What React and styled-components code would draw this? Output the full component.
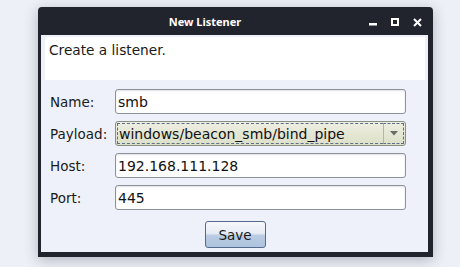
import React from "react";
import styled, { createGlobalStyle } from "styled-components";

const GlobalStyle = createGlobalStyle`
  html, body {
    margin: 0;
    background: #edf0f7;
  }
  * {
    box-sizing: border-box;
  }
`;

const App = () => {
  return (
    <Page>
      <GlobalStyle />
      <Window>
        <TitleBar>
          <Title>New Listener</Title>
          <Controls>
            <svg width="8" height="8" viewBox="0 0 8 8">
              <rect x="0" y="5" width="8" height="2.5" fill="#fff" />
            </svg>
            <svg width="8" height="8" viewBox="0 0 8 8">
              <rect x="1" y="1" width="6" height="6" fill="none" stroke="#fff" strokeWidth="2" />
            </svg>
            <svg width="9" height="9" viewBox="0 0 9 9">
              <path d="M1 1 L8 8 M8 1 L1 8" stroke="#fff" strokeWidth="2" />
            </svg>
          </Controls>
        </TitleBar>
        <Body>
          <Description>Create a listener.</Description>
          <Form>
            <Label>Name:</Label>
            <Field defaultValue="smb" />
            <Label>Payload:</Label>
            <Combo>
              <ComboText>windows/beacon_smb/bind_pipe</ComboText>
              <ComboArrow>
                <svg width="8" height="5" viewBox="0 0 8 5">
                  <path d="M0 0 L8 0 L4 4.5 Z" fill="#6a6d66" />
                </svg>
              </ComboArrow>
            </Combo>
            <Label>Host:</Label>
            <Field defaultValue="192.168.111.128" />
            <Label>Port:</Label>
            <Field defaultValue="445" />
          </Form>
          <SaveButton>Save</SaveButton>
        </Body>
      </Window>
    </Page>
  );
};
export default App;

const Page = styled.div`
  padding: 7px 0 0 38px;
  height: 267px;
`;

const Window = styled.div`
  width: 395px;
  height: 250px;
  display: flex;
  flex-direction: column;
  background: #21242d;
  border-radius: 4px 4px 0 0;
  padding: 0 5px 5px 3px;
  box-shadow: 0 3px 14px rgba(40, 44, 60, 0.3);
`;

const TitleBar = styled.div`
  height: 28px;
  display: flex;
  align-items: center;
`;

const Title = styled.div`
  flex: 1;
  text-align: center;
  color: #ffffff;
  font-family: "Noto Sans", sans-serif;
  font-weight: bold;
  font-size: 11px;
  padding-top: 1px;
`;

const Controls = styled.div`
  display: flex;
  align-items: center;
  gap: 14px;
  padding-right: 6px;
  margin-top: 2px;
`;

const Body = styled.div`
  flex: 1;
  background: #eef1f9;
  display: flex;
  flex-direction: column;
  padding: 2px 3px 0 4px;
`;

const Description = styled.div`
  height: 43px;
  background: #ffffff;
  padding: 5px 0 0 4px;
  font-family: "DejaVu Sans", sans-serif;
  font-size: 13.7px;
  color: #1a1a1a;
`;

const Form = styled.div`
  display: grid;
  grid-template-columns: 70px 291px;
  grid-auto-rows: 25px;
  row-gap: 7px;
  margin-top: 9px;
  align-items: center;
`;

const Label = styled.span`
  padding-left: 5px;
  font-family: "DejaVu Sans", sans-serif;
  font-size: 13.5px;
  color: #1a1a1a;
`;

const Field = styled.input`
  height: 25px;
  width: 100%;
  margin: 0;
  padding: 0 2px;
  border: 1px solid #8d9199;
  border-radius: 3px;
  background: #ffffff;
  box-shadow: inset 0 1px 2px rgba(0, 0, 0, 0.12);
  font-family: "DejaVu Sans", sans-serif;
  font-size: 14px;
  color: #111;
  outline: none;
`;

const Combo = styled.div`
  height: 25px;
  display: flex;
  border: 1px solid #8a8f86;
  border-radius: 3px;
  background: linear-gradient(#eeefe2, #dcdfc8);
  padding: 1px;
`;

const ComboText = styled.div`
  flex: 1;
  display: flex;
  align-items: center;
  padding-left: 1px;
  border: 1px dashed #5d6f88;
  border-right: none;
  font-family: "DejaVu Sans", sans-serif;
  font-size: 14px;
  color: #111;
  white-space: nowrap;
`;

const ComboArrow = styled.div`
  width: 21px;
  display: flex;
  align-items: center;
  justify-content: center;
  border: 1px dashed #5d6f88;
  border-left: 1px solid #b3b7a6;
`;

const SaveButton = styled.button`
  align-self: center;
  width: 61px;
  height: 27px;
  margin-top: 11px;
  border: 1px solid #566a8b;
  border-radius: 3px;
  background: linear-gradient(#f6f8fb 0%, #e6ecf4 45%, #b9cbe2 55%, #aec3de 100%);
  font-family: "DejaVu Sans", sans-serif;
  font-size: 13.5px;
  color: #1a1a1a;
  padding: 0;
`;
